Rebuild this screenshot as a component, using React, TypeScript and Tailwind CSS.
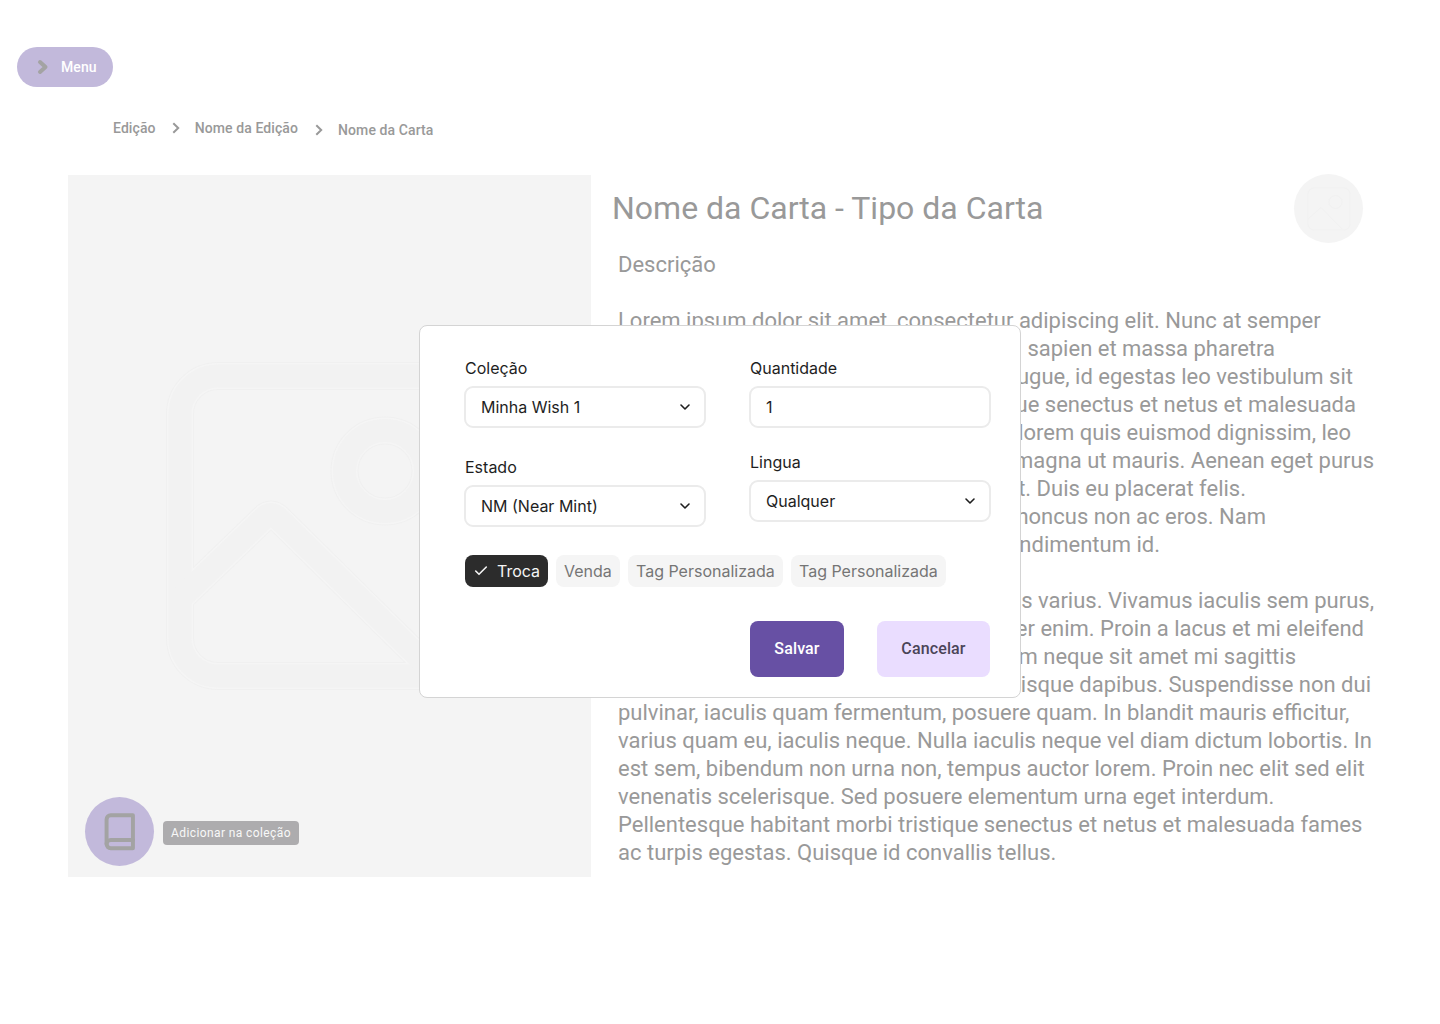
import React from "react";

type Line = { text: string; width?: string };

const lines: Line[] = [
  { text: "Descrição" },
  { text: "" },
  { text: "Lorem ipsum dolor sit amet, consectetur adipiscing elit. Nunc at semper" },
  { text: "sapien et massa pharetra", width: "w-[657px]" },
  { text: "augue, id egestas leo vestibulum sit", width: "w-[735px]" },
  { text: "tristique senectus et netus et malesuada", width: "w-[738px]" },
  { text: "lorem quis euismod dignissim, leo", width: "w-[733px]" },
  { text: "magna ut mauris. Aenean eget purus", width: "w-[756px]" },
  { text: "sit. Duis eu placerat felis.", width: "w-[628px]" },
  { text: "rhoncus non ac eros. Nam", width: "w-[648px]" },
  { text: "condimentum id.", width: "w-[542px]" },
  { text: "" },
  { text: "mattis varius. Vivamus iaculis sem purus,", width: "w-[756px]" },
  { text: "semper enim. Proin a lacus et mi eleifend", width: "w-[746px]" },
  { text: "diam neque sit amet mi sagittis", width: "w-[678px]" },
  { text: "Quisque dapibus. Suspendisse non dui", width: "w-[753px]" },
  { text: "pulvinar, iaculis quam fermentum, posuere quam. In blandit mauris efficitur," },
  { text: "varius quam eu, iaculis neque. Nulla iaculis neque vel diam dictum lobortis. In" },
  { text: "est sem, bibendum non urna non, tempus auctor lorem. Proin nec elit sed elit" },
  { text: "venenatis scelerisque. Sed posuere elementum urna eget interdum." },
  { text: "Pellentesque habitant morbi tristique senectus et netus et malesuada fames" },
  { text: "ac turpis egestas. Quisque id convallis tellus." },
];

function ChevronRight({ className, weight }: { className: string; weight: number }) {
  return (
    <svg viewBox="0 0 8 12" fill="none" stroke="currentColor" strokeWidth={weight} className={className}>
      <path d="M1.3 1.2 6.2 6 1.3 10.8" />
    </svg>
  );
}

function PictureShapes() {
  return (
    <>
      <rect x="14" y="14" width="300" height="300" rx="38" />
      <circle cx="219" cy="109" r="40.5" />
      <path d="M14 237 98 156q7-7 14 0L272 314" />
    </>
  );
}

function LargePicture() {
  return (
    <svg viewBox="0 0 328 328" fill="none" className="size-[328px]">
      <g stroke="#f0f0f0" strokeWidth="28"><PictureShapes /></g>
      <g stroke="#f5f5f5" strokeWidth="26"><PictureShapes /></g>
      <g stroke="#f2f2f2" strokeWidth="23"><PictureShapes /></g>
    </svg>
  );
}

function SmallPicture() {
  return (
    <svg viewBox="0 0 44 44" fill="none" stroke="#f1f1f1" className="size-11">
      <rect x="1" y="1" width="42" height="42" rx="6" />
      <circle cx="28.5" cy="15" r="6.5" />
      <path d="M1 32 14 20.500 35 42" />
    </svg>
  );
}

function Field({ label, value, select = true }: { label: string; value: string; select?: boolean }) {
  return (
    <div className="flex flex-col gap-2">
      <span className="text-base leading-[22px]">{label}</span>
      <div className="-mx-px -my-px flex h-[42px] w-[242px] items-center justify-between rounded-[9px] border-2 border-[#ebebeb] bg-white px-[15px] text-base leading-4">
        <span>{value}</span>
        {select && (
          <svg viewBox="0 0 16 16" fill="none" stroke="#1e1e1e" strokeWidth="1.6" strokeLinecap="round" strokeLinejoin="round" className="mr-[-4px] size-4">
            <path d="m4 6 4 4 4-4" />
          </svg>
        )}
      </div>
    </div>
  );
}

function Tag({ label, width, active = false }: { label: string; width: string; active?: boolean }) {
  return (
    <div className={"flex h-8 items-center gap-2 rounded-lg pl-2 whitespace-nowrap " + width + (active ? " bg-[#2c2c2c] text-[#f5f5f5]" : " bg-[#f5f5f5] text-[#757575]")}>
      {active && (
        <svg viewBox="0 0 16 16" fill="none" stroke="currentColor" strokeWidth="1.6" strokeLinecap="round" strokeLinejoin="round" className="size-4">
          <path d="M13.300 4 6 11.300 2.700 8" />
        </svg>
      )}
      <span className="text-base leading-4">{label}</span>
    </div>
  );
}

function Dialog() {
  return (
    <div className="absolute top-[325px] left-[419px] h-[373px] w-[602px] rounded-lg border border-[#d4d4d4] bg-white pt-[31px] pl-[45px] font-['Inter',sans-serif] text-[#1e1e1e]">
      <div className="flex gap-[45px]">
        <div className="flex w-60 flex-col gap-[29px]">
          <Field label="Coleção" value="Minha Wish 1" />
          <Field label="Estado" value="NM (Near Mint)" />
        </div>
        <div className="flex w-60 flex-col gap-6">
          <Field label="Quantidade" value="1" select={false} />
          <Field label="Lingua" value="Qualquer" />
        </div>
      </div>
      <div className="mt-[29px] flex gap-2">
        <Tag label="Troca" width="w-[83px]" active />
        <Tag label="Venda" width="w-16" />
        <Tag label="Tag Personalizada" width="w-[155px]" />
        <Tag label="Tag Personalizada" width="w-[155px]" />
      </div>
      <div className="mt-[34px] ml-[285px] flex gap-[33px] font-['Roboto',sans-serif] text-base font-medium tracking-[0.13px]">
        <button className="h-14 w-[94px] rounded-lg bg-[#6750a4] text-white">Salvar</button>
        <button className="h-14 w-[113px] rounded-lg bg-[#eaddff] text-[#4a4458]">Cancelar</button>
      </div>
    </div>
  );
}

export default function App() {
  return (
    <div className="relative h-[1024px] w-[1440px] overflow-hidden bg-white font-['Roboto',sans-serif] text-[#999]">
      <header className="pt-[47px] pl-[17px]">
        <button className="flex h-10 w-24 items-center rounded-full bg-[#c2b9db] pl-5 text-sm font-medium tracking-[0.1px] text-white">
          <svg viewBox="0 0 12 16" fill="none" stroke="#a3a3a3" strokeWidth="4" strokeLinecap="round" strokeLinejoin="round" className="mr-3 h-4 w-3">
            <path d="M3 3 8.500 8 3 13" />
          </svg>
          Menu
        </button>
      </header>
      <nav className="mt-[31px] ml-[113px] flex h-6 text-sm leading-5 font-medium tracking-[0.1px]">
        <span>Edição</span>
        <ChevronRight weight={2} className="mt-1 mr-[15px] ml-4 h-3 w-2" />
        <span>Nome da Edição</span>
        <ChevronRight weight={2} className="mt-1.5 mr-[15px] ml-[17px] h-3 w-2" />
        <span className="pt-0.5">Nome da Carta</span>
      </nav>
      <main className="mt-[33px] ml-[68px] flex">
        <section className="flex h-[702px] w-[523px] flex-col bg-[#f4f4f4]">
          <div className="mt-[187px] ml-[98px] h-[328px]">
            <LargePicture />
          </div>
          <div className="mt-[107px] ml-[17px] flex items-center">
            <div className="flex size-[69px] items-center justify-center rounded-full bg-[#c2b9db]">
              <svg viewBox="0 0 24 24" fill="none" stroke="#a3a3a3" strokeWidth="2.4" strokeLinecap="round" strokeLinejoin="round" className="size-[39.500px]">
                <path d="M4 19.500A2.500 2.500 0 0 1 6.500 17H20" />
                <path d="M6.500 2H20v20H6.500A2.500 2.500 0 0 1 4 19.500v-15A2.500 2.500 0 0 1 6.500 2z" />
              </svg>
            </div>
            <div className="mt-[3px] ml-[9px] h-6 w-[136px] rounded bg-[#adacae] text-center text-xs leading-6 tracking-[0.4px] whitespace-nowrap text-[#f8f8f8]">
              Adicionar na coleção
            </div>
          </div>
        </section>
        <section className="ml-[21px]">
          <div className="flex h-[76px] w-[751px] justify-between">
            <h1 className="mt-[13px] text-[32px] leading-10">Nome da Carta - Tipo da Carta</h1>
            <div className="-mt-px flex size-[69px] items-center justify-center rounded-full bg-[#f4f4f4]">
              <SmallPicture />
            </div>
          </div>
          <div className="ml-1.5 w-[770px] text-[22px] leading-7">
            {lines.map(({ text, width }, i) => (
              <div key={i} className={"flex h-7 whitespace-nowrap " + (width ? "justify-end " + width : "")}>
                <span>{text}</span>
              </div>
            ))}
          </div>
        </section>
      </main>
      <Dialog />
    </div>
  );
}
